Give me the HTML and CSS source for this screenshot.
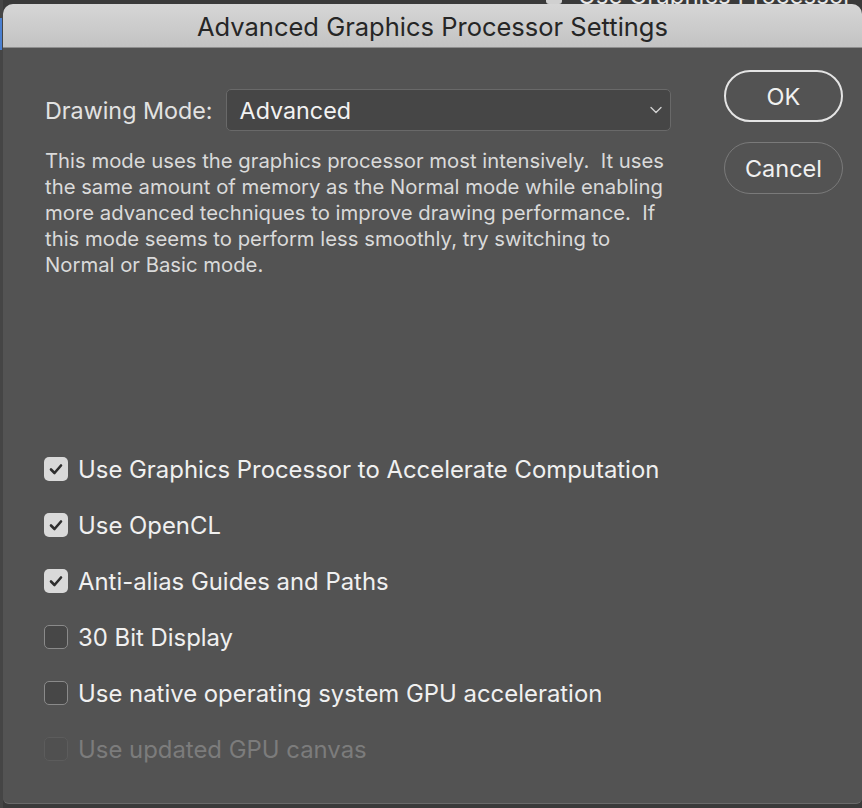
FILE: index.html
```html
<!DOCTYPE html>
<html>
<head>
<meta charset="utf-8">
<link rel="stylesheet" href="styles.css">
</head>
<body>
<div class="backdrop">
  <div class="bg-accent"></div>
  <div class="bg-check"></div>
  <div class="bg-text">Use Graphics Processor</div>
  <div class="dialog">
    <div class="titlebar">Advanced Graphics Processor Settings</div>
    <div class="content">
      <div class="main">
        <div class="mode-row">
          <span class="mode-label">Drawing Mode:</span>
          <div class="select">
            <span class="select-value">Advanced</span>
            <svg class="chevron" width="12" height="8" viewBox="0 0 12 8"><path d="M1 1.5 L6 6.5 L11 1.5" fill="none" stroke="#d0d0d0" stroke-width="1.4" stroke-linecap="round" stroke-linejoin="round"/></svg>
          </div>
        </div>
        <p class="desc">This mode uses the graphics processor most intensively.&nbsp; It uses<br>the same amount of memory as the Normal mode while enabling<br>more advanced techniques to improve drawing performance.&nbsp; If<br>this mode seems to perform less smoothly, try switching to<br>Normal or Basic mode.</p>
        <ul class="checks">
          <li class="check-row"><span class="box checked"><svg width="24" height="24" viewBox="0 0 24 24"><path d="M7 12.5 L10.5 16 L17 8.5" fill="none" stroke="#2e2e2e" stroke-width="2.6" stroke-linecap="round" stroke-linejoin="round"/></svg></span><span class="label">Use Graphics Processor to Accelerate Computation</span></li>
          <li class="check-row"><span class="box checked"><svg width="24" height="24" viewBox="0 0 24 24"><path d="M7 12.5 L10.5 16 L17 8.5" fill="none" stroke="#2e2e2e" stroke-width="2.6" stroke-linecap="round" stroke-linejoin="round"/></svg></span><span class="label">Use OpenCL</span></li>
          <li class="check-row"><span class="box checked"><svg width="24" height="24" viewBox="0 0 24 24"><path d="M7 12.5 L10.5 16 L17 8.5" fill="none" stroke="#2e2e2e" stroke-width="2.6" stroke-linecap="round" stroke-linejoin="round"/></svg></span><span class="label">Anti-alias Guides and Paths</span></li>
          <li class="check-row"><span class="box"></span><span class="label">30 Bit Display</span></li>
          <li class="check-row"><span class="box"></span><span class="label">Use native operating system GPU acceleration</span></li>
          <li class="check-row disabled"><span class="box"></span><span class="label">Use updated GPU canvas</span></li>
        </ul>
      </div>
      <div class="buttons">
        <button class="btn btn-default">OK</button>
        <button class="btn">Cancel</button>
      </div>
    </div>
  </div>
</div>
</body>
</html>
```
FILE: styles.css
```css
* { box-sizing: border-box; }
html, body { margin: 0; padding: 0; }
body {
  width: 862px;
  height: 808px;
  overflow: hidden;
  background: #3a3a3a;
  font-family: Inter, "Liberation Sans", sans-serif;
}
.backdrop {
  position: relative;
  width: 862px;
  height: 808px;
  padding: 4px 0 0 3px;
  background: linear-gradient(90deg, #454545 0, #454545 3px, #3a3a3a 3px);
}
.bg-accent {
  position: absolute;
  left: 0;
  top: 18px;
  width: 2px;
  height: 32px;
  background: #4a7fd0;
}
.bg-check {
  position: absolute;
  left: 546px;
  top: -12px;
  width: 16px;
  height: 16px;
  border-radius: 3px;
  background: #d0d0d0;
}
.bg-text {
  position: absolute;
  left: 578px;
  top: -16px;
  font-size: 24px;
  line-height: 24px;
  color: #e8e8e8;
}
.dialog {
  position: relative;
  width: 859px;
  height: 800px;
  background: #535353;
  border-radius: 10px 10px 6px 6px;
  overflow: hidden;
  border-bottom: 1px solid #6a6a6a;
}
.titlebar {
  height: 44px;
  background: linear-gradient(#d6d6d6, #c3c3c3);
  border-bottom: 1px solid #8e8e8e;
  color: #262626;
  font-size: 25.5px;
  line-height: 44px;
  padding-top: 1px;
  text-align: center;
}
.content {
  display: flex;
  align-items: flex-start;
  padding: 22px 19px 0 42px;
}
.main {
  flex: 1;
  padding-top: 19px;
}
.mode-row {
  display: flex;
  align-items: center;
  gap: 13px;
}
.mode-label {
  font-size: 23.3px;
  color: #e2e2e2;
}
.select {
  width: 445px;
  height: 42px;
  border: 1px solid #696969;
  border-radius: 5px;
  background: #464646;
  display: flex;
  align-items: center;
  justify-content: space-between;
  padding: 0 8px 0 13px;
}
.select-value {
  font-size: 23.3px;
  color: #f2f2f2;
}
.chevron { display: block; }
.desc {
  margin: 17px 0 0;
  font-size: 20.3px;
  line-height: 26px;
  color: #dadada;
  white-space: nowrap;
}
.checks {
  list-style: none;
  margin: 163px 0 0;
  padding: 0;
}
.check-row {
  height: 56px;
  display: flex;
  align-items: center;
  gap: 10px;
}
.box {
  width: 24px;
  height: 24px;
  border-radius: 5px;
  border: 1.5px solid #8a8a8a;
  background: #474747;
  display: flex;
  align-items: center;
  justify-content: center;
  flex: none;
  margin-left: -1px;
}
.box svg { display: block; }
.box.checked {
  border: none;
  background: #d9d9d9;
}
.label {
  font-size: 23.9px;
  color: #f0f0f0;
  white-space: nowrap;
}
.disabled .box {
  border-color: #5c5c5c;
  background: #505050;
}
.disabled .label { color: #7c7c7c; }
.buttons {
  display: flex;
  flex-direction: column;
  gap: 20px;
  width: 119px;
  flex: none;
}
.btn {
  height: 52px;
  border-radius: 26px;
  border: 1.5px solid #7a7a7a;
  background: transparent;
  color: #f0f0f0;
  font-family: inherit;
  font-size: 23.5px;
  padding: 0;
}
.btn-default {
  border: 2px solid #e4e4e4;
}
```
